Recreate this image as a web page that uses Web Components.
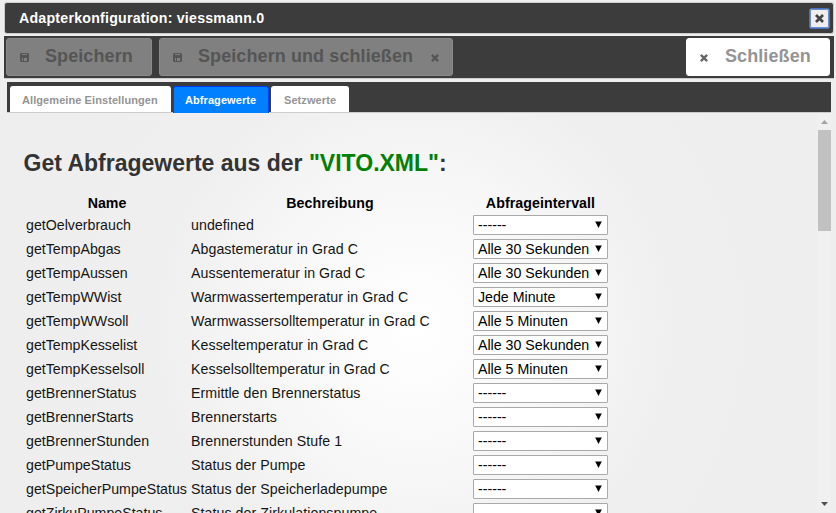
<!DOCTYPE html>
<html lang="de"><head><meta charset="utf-8"><title>Adapterkonfiguration</title>
<style>html,body{margin:0;height:100%;overflow:hidden;background:#eee;font-family:"Liberation Sans",Arial,sans-serif}</style></head>
<body><adapter-config></adapter-config>
<script>
const define=(name,html,init)=>customElements.define(name,class extends HTMLElement{
  constructor(){super();const t=document.createElement('template');t.innerHTML=html;
    this.attachShadow({mode:'open'}).append(t.content.cloneNode(true));}
  connectedCallback(){if(init&&!this.ready){this.ready=true;init(this,this.shadowRoot);}}
});
define('ui-icon',`<style>:host{display:block;width:10px;height:10px;color:#555}svg{display:block;width:100%;height:100%}</style><svg></svg>`,(el,r)=>{
  r.querySelector('svg').setAttribute('viewBox',el.getAttribute('name')==='disk'?'0 0 9 9':'0 0 10 10');
  r.querySelector('svg').innerHTML=el.getAttribute('name')==='disk'
  ?'<path fill="currentColor" fill-rule="evenodd" d="M1 0h7l1 1v7l-1 1H1L0 8V1zM2 1v1h5V1zM2 5v3h1V5zM4 5v3h3V5z"/>'
  :'<path stroke="currentColor" stroke-width="3" d="M1.1 1.1l7.8 7.8M8.9 1.1L1.1 8.9"/>';
});
define('dialog-title',`<style>:host{display:flex;box-sizing:border-box;height:32px;margin:0 2px 0 4px;padding:0 3px 0 14px;align-items:center;justify-content:space-between;background:#3c3c3c;border:1px solid #ccc;border-radius:3px;color:#fff;font-weight:bold;font-size:14.2px;letter-spacing:.22px;line-height:16px}
button{box-sizing:border-box;display:grid;place-items:center;width:21px;height:21px;padding:0;border:1px solid #4672bd;outline:1px solid #6c8dc5;outline-offset:-2px;border-radius:3px;background:#eee}ui-icon{width:9px;height:9px;color:#444}</style><slot></slot><button aria-label="Schließen"><ui-icon name="close"></ui-icon></button>`);
define('tool-button',`<style>:host{display:flex;box-sizing:border-box;width:146px;height:38px;padding:0 13px;align-items:center;background:#808080;border:1px solid #8a8a8a;border-radius:3px;color:#555;font-size:18px;letter-spacing:.09px;font-weight:bold;line-height:20px}
:host([wide]){width:294px;margin-left:7px}:host([light]){width:144px;background:#fff;border-color:#fff;color:#949494;margin-left:auto}
ui-icon{width:9px;height:9px;margin-top:1px}.label{margin-left:16px;padding-bottom:2px;white-space:nowrap}ui-icon[name=close]{width:8px;height:8px}.end{margin-left:auto}:host(:not([wide])) .end{display:none}:host([light]) ui-icon{color:#666}:host([light]) .label{margin-left:17px}</style><ui-icon class="start"></ui-icon><span class="label"><slot></slot></span><ui-icon class="end" name="close"></ui-icon>`,(el,r)=>{
  const old=r.querySelector('.start');const icon=document.createElement('ui-icon');icon.setAttribute('name',el.getAttribute('icon'));old.replaceWith(icon);
});
define('tool-bar',`<style>:host{display:flex;box-sizing:border-box;height:43px;margin:2px 2px 0 4px;padding:2px 4px 0 2px;background:#3c3c3c;border-bottom:1px solid #ccc}</style><slot></slot>`);
define('tab-item',`<style>:host{box-sizing:border-box;height:26px;width:161px;padding:7px 0 0 11px;background:#fff;border:1px solid #fff;border-bottom:0;border-radius:3px 3px 0 0;color:#949494;font-size:11px;letter-spacing:.08px;font-weight:bold;line-height:13px;white-space:nowrap}
:host(:last-child){width:78px;padding-left:12px}
:host([active]){width:96px;margin:0 2px;height:27px;background:#007fff;border-color:#003eff;color:#fff}</style><slot></slot>`);
define('tab-bar',`<style>:host{display:flex;box-sizing:border-box;height:31px;margin:3px 5px 0 7px;padding:4px 3px 0;background:#3c3c3c;border-bottom:1px solid #ccc}</style><slot></slot>`);
define('interval-select',`<style>:host{display:flex;box-sizing:border-box;width:135px;height:20px;padding:0 5px 0 4px;align-items:center;justify-content:space-between;background:#fff;border:1px solid #a9a9a9;border-radius:1px;line-height:18px;white-space:nowrap}svg{width:7px;height:7px;margin-bottom:1px;flex:none}</style><slot></slot><svg viewBox="0 0 7 7"><path d="M.2.5h6.6L3.5 7z"/></svg>`);
define('query-table',`<style>:host{display:block;font-size:14.2px;color:#151515}.row{display:grid;grid-template-columns:165px 282px 135px;height:24px;line-height:20px;white-space:nowrap}.row span:nth-child(2){letter-spacing:.06px}.head{height:22px;color:#000;font-weight:bold;text-align:center}.head span:first-child{padding-right:3px}.head span:nth-child(2){padding-right:4px}.head span:last-child{letter-spacing:.08px}interval-select{color:#000}</style><div class="row head"><span>Name</span><span>Bechreibung</span><span>Abfrageintervall</span></div>`,(el,r)=>{
 const data=[['getOelverbrauch','undefined','------'],['getTempAbgas','Abgastemeratur in Grad C','Alle 30 Sekunden'],['getTempAussen','Aussentemeratur in Grad C','Alle 30 Sekunden'],['getTempWWist','Warmwassertemperatur in Grad C','Jede Minute'],['getTempWWsoll','Warmwassersolltemperatur in Grad C','Alle 5 Minuten'],['getTempKesselist','Kesseltemperatur in Grad C','Alle 30 Sekunden'],['getTempKesselsoll','Kesselsolltemperatur in Grad C','Alle 5 Minuten'],['getBrennerStatus','Ermittle den Brennerstatus','------'],['getBrennerStarts','Brennerstarts','------'],['getBrennerStunden','Brennerstunden Stufe 1','------'],['getPumpeStatus','Status der Pumpe','------'],['getSpeicherPumpeStatus','Status der Speicherladepumpe','------'],['getZirkuPumpeStatus','Status der Zirkulationspumpe','------']];
 for(const [n,d,v] of data){const row=document.createElement('div');row.className='row';row.innerHTML=`<span>${n}</span><span>${d}</span><interval-select>${v}</interval-select>`;r.append(row);}
});
define('scroll-bar',`<style>:host{display:flex;flex-direction:column;align-items:center;width:14px;margin-right:5px;height:400px;background:#f0f0f0}svg{width:7px;height:4px;flex:none}.up{margin-top:7px;fill:#a3a3a3}.thumb{width:13px;height:101px;margin-top:6px;background:#c1c1c1}.down{margin-top:auto;margin-bottom:6px;fill:#505050}</style><svg class="up" viewBox="0 0 7 4"><path d="M0 4L3.5 0 7 4z"/></svg><div class="thumb"></div><svg class="down" viewBox="0 0 7 4"><path d="M0 0h7L3.5 4z"/></svg>`);
define('adapter-config',`<style>:host{display:flex;flex-direction:column;height:513px;padding-top:2px;box-sizing:border-box;overflow:hidden;background:#eee}
main{display:flex;justify-content:space-between;height:400px;overflow:hidden;background:radial-gradient(circle 420px at 415px 215px,#fff 0%,#f7f7f7 35%,#efefef 62%,#eee 100%)}
.content{padding:36px 0 0 23.5px}h2{margin:0;height:44px;color:#333;font-size:23px;line-height:28px;white-space:nowrap}h2 b{color:green}query-table{margin-left:2.5px}scroll-bar{height:399px}</style>
<dialog-title>Adapterkonfiguration: viessmann.0</dialog-title>
<tool-bar><tool-button icon="disk">Speichern</tool-button><tool-button icon="disk" wide>Speichern und schließen</tool-button><tool-button icon="close" light>Schließen</tool-button></tool-bar>
<tab-bar><tab-item>Allgemeine Einstellungen</tab-item><tab-item active>Abfragewerte</tab-item><tab-item>Setzwerte</tab-item></tab-bar>
<main><section class="content"><h2>Get Abfragewerte aus der <b>"VITO.XML"</b>:</h2><query-table></query-table></section><scroll-bar></scroll-bar></main>`);
</script></body></html>
